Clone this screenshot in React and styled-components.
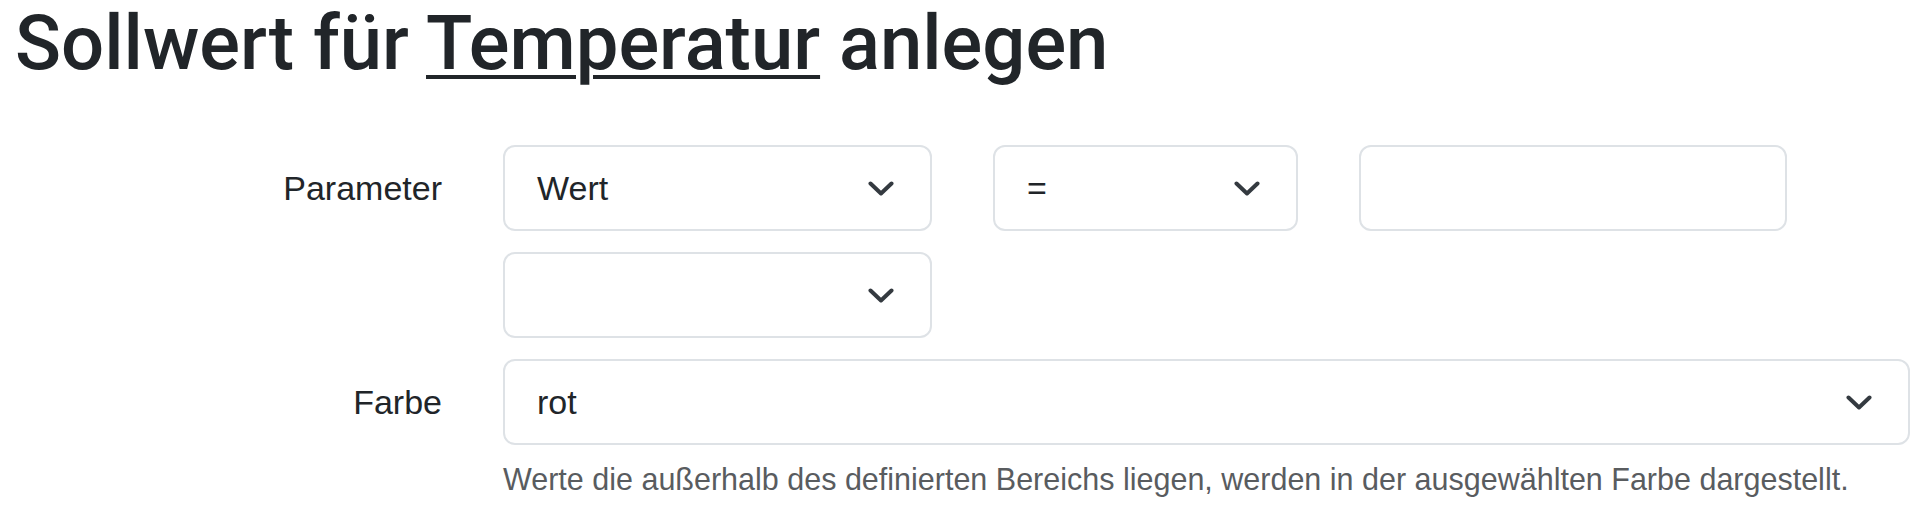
import React from "react";
import styled, { createGlobalStyle } from "styled-components";

const GlobalStyle = createGlobalStyle`
  html, body {
    margin: 0;
    padding: 0;
    background: #ffffff;
  }
  body {
    font-family: "Liberation Sans", Arial, sans-serif;
    color: #212529;
  }
  * { box-sizing: border-box; }
`;

const Page = styled.div`
  padding: 0 14px 0 15px;
`;

const Title = styled.h1`
  margin: -2px 0 0 0;
  font-family: "Roboto", "Liberation Sans", sans-serif;
  font-weight: 500;
  font-size: 76px;
  line-height: 1.2;
  color: #212529;
  white-space: nowrap;
`;

const Underlined = styled.span`
  text-decoration: underline;
  text-decoration-thickness: 4px;
  text-underline-offset: 6px;
`;

const Form = styled.div`
  margin-top: 56px;
  display: grid;
  grid-template-columns: 427px 1fr;
  column-gap: 61px;
  row-gap: 21px;
`;

const Label = styled.div`
  font-size: 34px;
  color: #212529;
  text-align: right;
  height: 86px;
  display: flex;
  align-items: center;
  justify-content: flex-end;
`;

const Stack = styled.div`
  display: flex;
  flex-direction: column;
  gap: 21px;
`;

const Row = styled.div`
  display: flex;
  gap: 61px;
`;

const SelectBox = styled.div`
  width: ${(p) => p.$w || "100%"};
  height: 86px;
  border: 2px solid #dee2e6;
  border-radius: 12px;
  background: #fff;
  display: flex;
  align-items: center;
  justify-content: space-between;
  padding: 0 36px 0 32px;
  font-size: 34px;
  color: #212529;
`;

const TextInput = styled.input`
  width: ${(p) => p.$w};
  height: 86px;
  border: 2px solid #dee2e6;
  border-radius: 12px;
  background: #fff;
  padding: 0 32px;
  font-family: "Liberation Sans", Arial, sans-serif;
  font-size: 34px;
  color: #212529;
  outline: none;
`;

const FieldCol = styled.div`
  display: flex;
  flex-direction: column;
`;

const Help = styled.div`
  margin-top: 12px;
  font-size: 30.5px;
  line-height: 1.5;
  color: #595c5f;
  white-space: nowrap;
`;

const Chevron = () => (
  <svg width="26" height="15" viewBox="0 0 26 15" aria-hidden="true">
    <path
      d="M2.5 2.5 L13 12.5 L23.5 2.5"
      fill="none"
      stroke="#343a40"
      strokeWidth="4"
      strokeLinecap="round"
      strokeLinejoin="round"
    />
  </svg>
);

const Select = ({ value, w }) => (
  <SelectBox $w={w}>
    <span>{value}</span>
    <Chevron />
  </SelectBox>
);

export default function App() {
  return (
    <Page>
      <GlobalStyle />
      <Title>
        Sollwert für <Underlined>Temperatur</Underlined> anlegen
      </Title>
      <Form>
        <Label>Parameter</Label>
        <Stack>
          <Row>
            <Select value="Wert" w="429px" />
            <Select value="=" w="305px" />
            <TextInput $w="428px" type="text" defaultValue="" />
          </Row>
          <Row>
            <Select value="" w="429px" />
          </Row>
        </Stack>
        <Label>Farbe</Label>
        <FieldCol>
          <Select value="rot" />
          <Help>
            Werte die außerhalb des definierten Bereichs liegen, werden in der
            ausgewählten Farbe dargestellt.
          </Help>
        </FieldCol>
      </Form>
    </Page>
  );
}
